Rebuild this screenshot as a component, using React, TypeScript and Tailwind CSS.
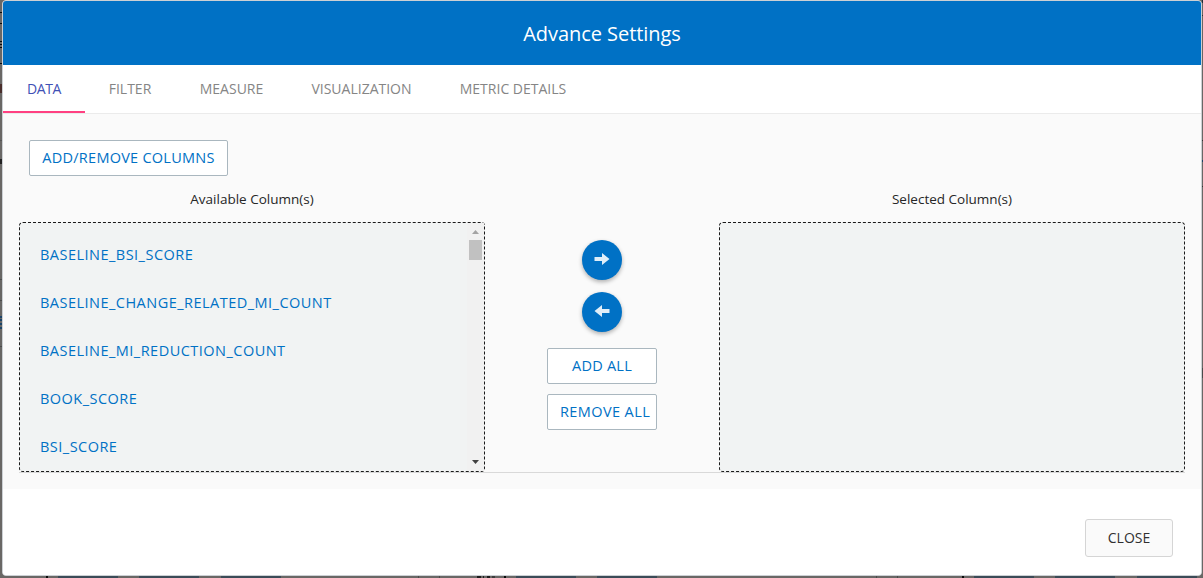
import React from "react";

const tabs = [
  { label: "DATA", cls: "w-[82px] text-[#3f51b5] border-[#ff4081]", sp: "tracking-[-0.4px]" },
  { label: "FILTER", cls: "w-[90px] text-[#858585] border-transparent", sp: "tracking-[0px]" },
  { label: "MEASURE", cls: "w-[113px] text-[#858585] border-transparent", sp: "tracking-[0px]" },
  { label: "VISUALIZATION", cls: "w-[147px] text-[#858585] border-transparent", sp: "tracking-[0px]" },
  { label: "METRIC DETAILS", cls: "w-[156px] text-[#858585] border-transparent", sp: "tracking-[0px]" },
];

const columns = [
  "BASELINE_BSI_SCORE",
  "BASELINE_CHANGE_RELATED_MI_COUNT",
  "BASELINE_MI_REDUCTION_COUNT",
  "BOOK_SCORE",
  "BSI_SCORE",
];

const BLACK = "#0a0a0a";
const STEEL = "#3b4b57";
const LINE = "#4a4a4a";

// [start, length, colour] of the dimmed page's marks along each visible edge
type Mark = [number, number, string];

const bottomMarks: Mark[] = [
  [46, 2, BLACK],
  [58, 60, STEEL],
  [139, 60, STEEL],
  [221, 60, STEEL],
  [418, 1, LINE],
  [439, 1, LINE],
  [477, 4, "#1d1d1d"],
  [483, 1, "#1d1d1d"],
  [487, 3, "#1d1d1d"],
  [492, 3, "#3d3d3d"],
  [504, 2, BLACK],
  [516, 60, STEEL],
  [597, 60, STEEL],
  [876, 1, LINE],
  [897, 1, LINE],
  [962, 2, BLACK],
  [974, 60, STEEL],
  [1055, 60, STEEL],
  [1137, 60, STEEL],
];

const leftMarks: Mark[] = [
  [12, 1, BLACK],
  [23, 1, BLACK],
  [41, 1, BLACK],
  [44, 1, BLACK],
  [47, 1, BLACK],
  [63, 1, BLACK],
  [84, 9, "#4a2f2c"],
  [140, 1, "#555555"],
  [159, 5, "#222222"],
  [279, 1, "#4c4c4c"],
  [300, 1, "#4c4c4c"],
  [316, 2, "#1b4469"],
  [319, 2, "#1b4469"],
  [323, 2, "#1b4469"],
  [327, 2, "#1b4469"],
  [346, 1, "#4c4c4c"],
];

const rightMarks: Mark[] = [
  [0, 3, "#1c2c3c"],
  [15, 1, "#333333"],
  [140, 1, "#333333"],
  [160, 2, "#1b4469"],
  [186, 1, "#333333"],
  [368, 10, "#4a4a4a"],
];

function Edge({ marks, vertical }: { marks: Mark[]; vertical?: boolean }) {
  return (
    <div className={vertical ? "flex h-full w-full flex-col" : "flex h-full w-full"}>
      {marks.map(([start, length, color], i) => {
        const gap = start - (i ? marks[i - 1][0] + marks[i - 1][1] : 0);
        return (
          <div
            key={start}
            className="shrink-0"
            style={
              vertical
                ? { marginTop: gap, height: length, background: color }
                : { marginLeft: gap, width: length, background: color }
            }
          />
        );
      })}
    </div>
  );
}

const outlined =
  "flex items-center rounded-[2px] border border-[#aab7bf] bg-white text-[14.5px] whitespace-nowrap text-[#0071c5]";

function RoundButton({ flip }: { flip?: boolean }) {
  return (
    <button className="flex h-10 w-10 items-center justify-center rounded-full bg-[#0071c5] shadow-[0_2px_4px_rgba(0,0,0,0.3)]">
      <svg width="40" height="40" viewBox="0 0 40 40" className="shrink-0">
        <path
          d={flip ? "M12.500 19l7.500-6v4h7.500v4H20v4z" : "M27.500 19l-7.500-6v4h-7.500v4H20v4z"}
          fill="#e0eef8"
        />
      </svg>
    </button>
  );
}

export default function App() {
  return (
    <div className="flex h-[578px] w-[1203px] flex-col overflow-hidden bg-[#696765] font-['Open_Sans',sans-serif]">
      <div className="flex h-[576px] shrink-0">
        <div className="w-[2px] shrink-0">
          <Edge marks={leftMarks} vertical />
        </div>
        <div className="flex h-[576px] w-[1200px] shrink-0 flex-col overflow-hidden rounded-[4px] border border-[#ccd0d4] bg-white">
          <header className="flex h-16 shrink-0 items-center justify-center bg-[#0071c5] pt-px text-[20px] text-white">
            <span className="tracking-[-0.05px]">Advance Settings</span>
          </header>
          <nav className="flex h-[49px] shrink-0 border-b border-[#ebebeb] text-[14px]">
            {tabs.map((t) => (
              <div key={t.label} className={`flex h-12 items-center justify-center border-b-2 ${t.cls}`}>
                <span className={t.sp}>{t.label}</span>
              </div>
            ))}
          </nav>
          <main className="flex h-[375px] shrink-0 flex-col bg-[#fafafa] px-4">
            <button className={`ml-[10px] mt-[26px] h-9 w-[199px] shrink-0 justify-center tracking-[0.25px] ${outlined}`}>
              ADD/REMOVE COLUMNS
            </button>
            <div className="flex h-[46px] shrink-0 items-center justify-between pt-px text-[13.5px] text-[#262626]">
              <span className="w-[466px] text-center">Available Column(s)</span>
              <span className="w-[466px] text-center">Selected Column(s)</span>
            </div>
            <div className="flex h-[251px] shrink-0 justify-between border-b border-[#d9d9d9]">
              <div className="flex h-[250px] w-[466px] justify-between rounded-[4px] border border-dashed border-[#1a1a1a] bg-[#f1f3f3]">
                <ul className="flex flex-col pl-5 pt-[8px] text-[14.5px] text-[#0071c5]">
                  {columns.map((c) => (
                    <li key={c} className="flex h-12 items-center tracking-[0.48px]">
                      {c}
                    </li>
                  ))}
                </ul>
                <div className="flex w-[17px] flex-col items-center justify-between bg-[#f1f1f1]">
                  <div className="flex flex-col items-center">
                    <svg width="17" height="17" viewBox="0 0 17 17">
                      <path d="M5 11h7L8.500 7z" fill="#a3a3a3" />
                    </svg>
                    <div className="h-5 w-[13px] bg-[#c1c1c1]" />
                  </div>
                  <svg width="17" height="17" viewBox="0 0 17 17">
                    <path d="M5 6h7L8.500 10z" fill="#404040" />
                  </svg>
                </div>
              </div>
              <div className="flex w-[110px] flex-col items-center pt-[18px]">
                <RoundButton />
                <div className="h-3" />
                <RoundButton flip />
                <button className={`mt-4 h-9 w-[110px] justify-center tracking-[0.25px] ${outlined}`}>ADD ALL</button>
                <button className={`mt-[10px] h-9 w-[110px] pl-3 tracking-[0.4px] ${outlined}`}>REMOVE ALL</button>
              </div>
              <div className="h-[250px] w-[466px] rounded-[4px] border border-dashed border-[#1a1a1a] bg-[#f1f3f3]" />
            </div>
          </main>
          <footer className="flex h-[86px] shrink-0 justify-end bg-white pr-7 pt-[30px]">
            <button className="flex h-[38px] w-[88px] items-center justify-center rounded-[3px] border border-[#d5d5d5] bg-[#fafafa] pb-[2px] text-[14px] text-[#303030]">
              CLOSE
            </button>
          </footer>
        </div>
        <div className="w-px shrink-0">
          <Edge marks={rightMarks} vertical />
        </div>
      </div>
      <div className="h-[2px] shrink-0">
        <Edge marks={bottomMarks} />
      </div>
    </div>
  );
}
